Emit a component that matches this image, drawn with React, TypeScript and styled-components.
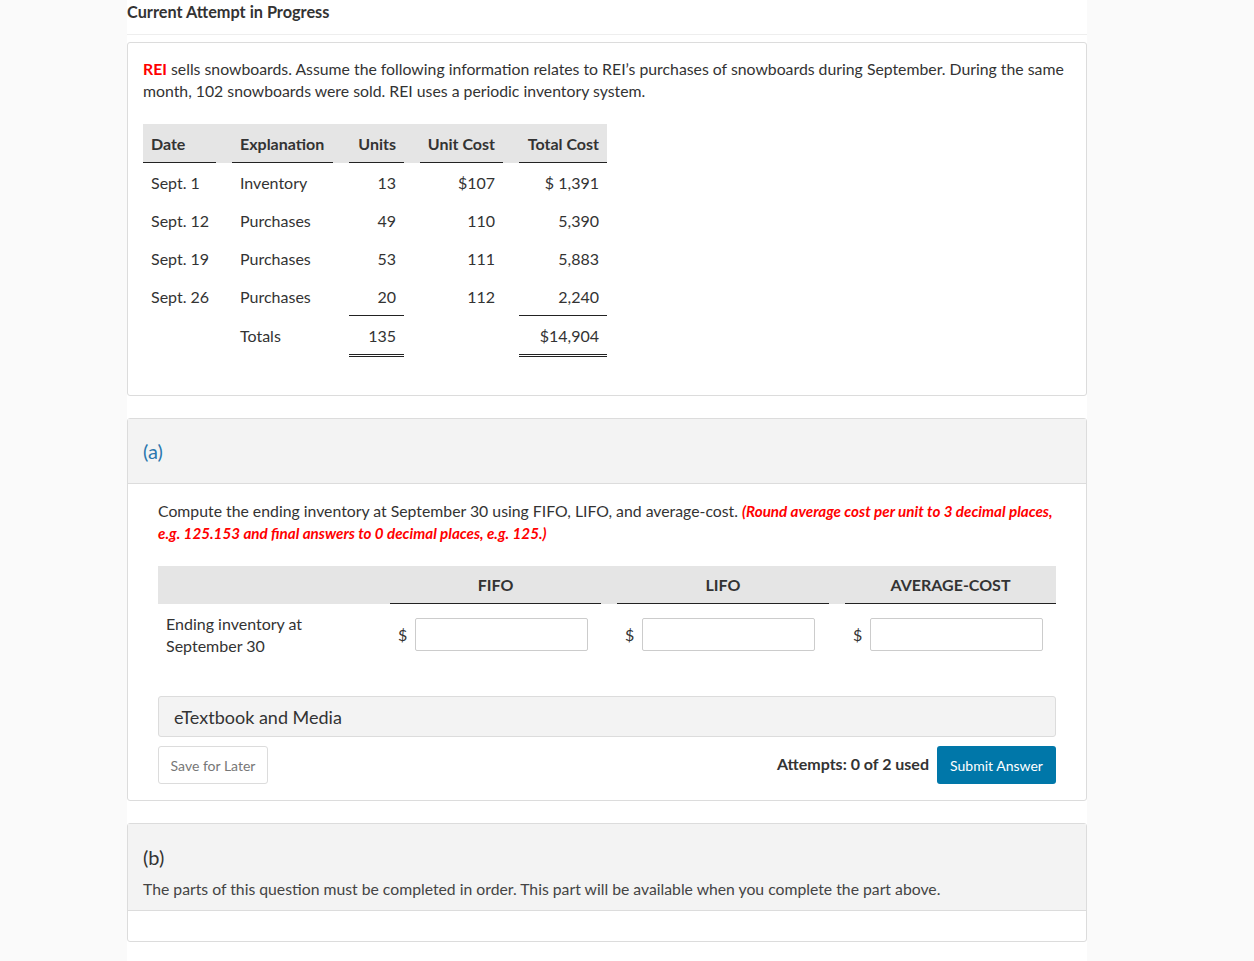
import styled, { createGlobalStyle } from "styled-components";

const GlobalStyle = createGlobalStyle`
  html, body {
    margin: 0;
    padding: 0;
    background: #fafafa;
  }
  body {
    font-family: Lato, "Open Sans", Arial, sans-serif;
    font-size: 15.75px;
    color: #333;
  }
`;

const Column = styled.div`
  width: 960px;
  margin-left: 127px;
  background: #fff;
  min-height: 961px;
`;

const AttemptHeading = styled.div`
  height: 35px;
  box-sizing: border-box;
  padding-top: 2px;
  font-weight: 700;
  font-size: 16.3px;
  color: #333;
  border-bottom: 1px solid #eee;
  margin-bottom: 7px;
`;

const Card = styled.div`
  border: 1px solid #dcdcdc;
  border-radius: 3px;
  background: #fff;
  box-sizing: border-box;
  margin-bottom: 22px;
`;

const Intro = styled.div`
  padding: 15px 15px 38px;
`;

const Para = styled.p`
  margin: 0;
  line-height: 22px;
  font-size: 15.8px;
`;

const Red = styled.span<{ $italic?: boolean }>`
  color: #ff0000;
  font-weight: 700;
  font-style: ${(p) => (p.$italic ? "italic" : "normal")};
  font-size: ${(p) => (p.$italic ? "15.2px" : "inherit")};
`;

const DataTable = styled.table`
  border-collapse: collapse;
  margin-top: 22px;
  font-size: 16px;
  white-space: nowrap;
`;

const HeadRow = styled.tr`
  background: #e5e5e5;
`;

const Cell = styled.td<{ $first?: boolean; $last?: boolean }>`
  padding: 0 ${(p) => (p.$last ? 0 : 8)}px 0 ${(p) => (p.$first ? 0 : 8)}px;
  vertical-align: top;
`;

const CellBox = styled.div<{
  $w: number;
  $right?: boolean;
  $head?: boolean;
  $total?: boolean;
  $lined?: boolean;
}>`
  width: ${(p) => p.$w}px;
  height: ${(p) => (p.$head ? 39 : p.$total ? 42 : 38)}px;
  box-sizing: border-box;
  padding: 0 8px;
  display: flex;
  align-items: center;
  white-space: nowrap;
  justify-content: ${(p) => (p.$right ? "flex-end" : "flex-start")};
  font-weight: ${(p) => (p.$head ? 700 : 400)};
  border-bottom: ${(p) =>
    p.$head ? "1px solid #222" : p.$lined ? "3px double #222" : "3px solid transparent"};
  border-top: ${(p) =>
    p.$lined ? "1px solid #222" : p.$total ? "1px solid transparent" : "none"};
  ${(p) => (p.$head || p.$total ? "" : "border-bottom: none;")}
`;

const PartHeader = styled.div<{ $tall?: boolean }>`
  background: #f3f3f3;
  border-bottom: 1px solid #dcdcdc;
  padding: ${(p) => (p.$tall ? "21px 15px 10px" : "20px 15px 20px")};
`;

const PartLabel = styled.div<{ $blue?: boolean }>`
  font-size: 20px;
  line-height: 24px;
  color: ${(p) => (p.$blue ? "#2b77ae" : "#333")};
`;

const PartNote = styled.div`
  margin-top: 9px;
  line-height: 22px;
  color: #444;
`;

const PartBody = styled.div`
  padding: 16px 30px 16px;
`;

const AnswerHead = styled.div`
  display: grid;
  grid-template-columns: 216px 211px 212px 211px;
  column-gap: 16px;
  background: #e5e5e5;
  margin-top: 22px;
  font-size: 16px;
`;

const AnswerHeadCell = styled.div<{ $line?: boolean }>`
  height: 38px;
  display: flex;
  align-items: center;
  justify-content: center;
  font-weight: 700;
  text-transform: uppercase;
  border-bottom: ${(p) => (p.$line ? "1px solid #222" : "none")};
  box-sizing: border-box;
`;

const AnswerRow = styled.div`
  display: grid;
  grid-template-columns: 216px 211px 212px 211px;
  column-gap: 16px;
  padding: 9px 0 39px;
  font-size: 16px;
`;

const RowLabel = styled.div`
  padding-left: 8px;
  line-height: 22px;
`;

const ValueCell = styled.div`
  display: flex;
  align-items: center;
  padding-left: 8px;
  height: 33px;
  margin-top: 5px;
`;

const Dollar = styled.span`
  width: 17px;
`;

const AmountInput = styled.input`
  width: 173px;
  height: 33px;
  box-sizing: border-box;
  border: 1px solid #ccc;
  border-radius: 2px;
  font-family: inherit;
  font-size: 15px;
  padding: 0 6px;
`;

const MediaBar = styled.div`
  background: #f3f3f3;
  border: 1px solid #dcdcdc;
  border-radius: 3px;
  height: 41px;
  box-sizing: border-box;
  padding-left: 15px;
  display: flex;
  align-items: center;
  font-size: 18px;
  color: #333;
`;

const ActionRow = styled.div`
  display: flex;
  align-items: center;
  margin-top: 9px;
`;

const GhostButton = styled.button`
  height: 38px;
  width: 110px;
  border: 1px solid #dcdcdc;
  border-radius: 3px;
  background: #fff;
  color: #777;
  font-family: inherit;
  font-size: 14px;
  padding: 0;
`;

const Spacer = styled.div`
  flex: 1;
`;

const Attempts = styled.span`
  font-weight: 700;
  font-size: 16px;
  margin-right: 8px;
  margin-top: -3px;
`;

const PrimaryButton = styled.button`
  height: 38px;
  width: 119px;
  border: none;
  border-radius: 3px;
  background: #0077a9;
  color: #fff;
  font-family: inherit;
  font-size: 14px;
  padding: 0;
`;

const EmptyFoot = styled.div`
  height: 30px;
`;

const rows = [
  ["Sept. 1", "Inventory", "13", "$107", "$ 1,391"],
  ["Sept. 12", "Purchases", "49", "110", "5,390"],
  ["Sept. 19", "Purchases", "53", "111", "5,883"],
  ["Sept. 26", "Purchases", "20", "112", "2,240"],
];

const widths = [73, 101, 55, 83, 88];
const heads = ["Date", "Explanation", "Units", "Unit Cost", "Total Cost"];

export default function App() {
  return (
    <>
      <GlobalStyle />
      <Column>
        <AttemptHeading>Current Attempt in Progress</AttemptHeading>

        <Card>
          <Intro>
            <Para>
              <Red>REI</Red> sells snowboards. Assume the following information
              relates to REI’s purchases of snowboards during September. During
              the same month, 102 snowboards were sold. REI uses a periodic
              inventory system.
            </Para>
            <DataTable>
              <tbody>
                <HeadRow>
                  {heads.map((h, i) => (
                    <Cell key={h} $first={i === 0} $last={i === 4}>
                      <CellBox $w={widths[i]} $head $right={i > 1}>
                        {h}
                      </CellBox>
                    </Cell>
                  ))}
                </HeadRow>
                {rows.map((r) => (
                  <tr key={r[0]}>
                    {r.map((v, i) => (
                      <Cell key={i} $first={i === 0} $last={i === 4}>
                        <CellBox $w={widths[i]} $right={i > 1}>
                          {v}
                        </CellBox>
                      </Cell>
                    ))}
                  </tr>
                ))}
                <tr>
                  {["", "Totals", "135", "", "$14,904"].map((v, i) => (
                    <Cell key={i} $first={i === 0} $last={i === 4}>
                      <CellBox
                        $w={widths[i]}
                        $right={i > 1}
                        $total
                        $lined={i === 2 || i === 4}
                      >
                        {v}
                      </CellBox>
                    </Cell>
                  ))}
                </tr>
              </tbody>
            </DataTable>
          </Intro>
        </Card>

        <Card>
          <PartHeader>
            <PartLabel $blue>(a)</PartLabel>
          </PartHeader>
          <PartBody>
            <Para>
              Compute the ending inventory at September 30 using FIFO, LIFO, and
              average-cost.{" "}
              <Red $italic>
                (Round average cost per unit to 3 decimal places, e.g. 125.153
                and final answers to 0 decimal places, e.g. 125.)
              </Red>
            </Para>
            <AnswerHead>
              <AnswerHeadCell />
              <AnswerHeadCell $line>FIFO</AnswerHeadCell>
              <AnswerHeadCell $line>LIFO</AnswerHeadCell>
              <AnswerHeadCell $line>Average-Cost</AnswerHeadCell>
            </AnswerHead>
            <AnswerRow>
              <RowLabel>
                Ending inventory at
                <br />
                September 30
              </RowLabel>
              {["fifo", "lifo", "avg"].map((k) => (
                <ValueCell key={k}>
                  <Dollar>$</Dollar>
                  <AmountInput type="text" />
                </ValueCell>
              ))}
            </AnswerRow>
            <MediaBar>eTextbook and Media</MediaBar>
            <ActionRow>
              <GhostButton>Save for Later</GhostButton>
              <Spacer />
              <Attempts>Attempts: 0 of 2 used</Attempts>
              <PrimaryButton>Submit Answer</PrimaryButton>
            </ActionRow>
          </PartBody>
        </Card>

        <Card>
          <PartHeader $tall>
            <PartLabel>(b)</PartLabel>
            <PartNote>
              The parts of this question must be completed in order. This part
              will be available when you complete the part above.
            </PartNote>
          </PartHeader>
          <EmptyFoot />
        </Card>
      </Column>
    </>
  );
}
